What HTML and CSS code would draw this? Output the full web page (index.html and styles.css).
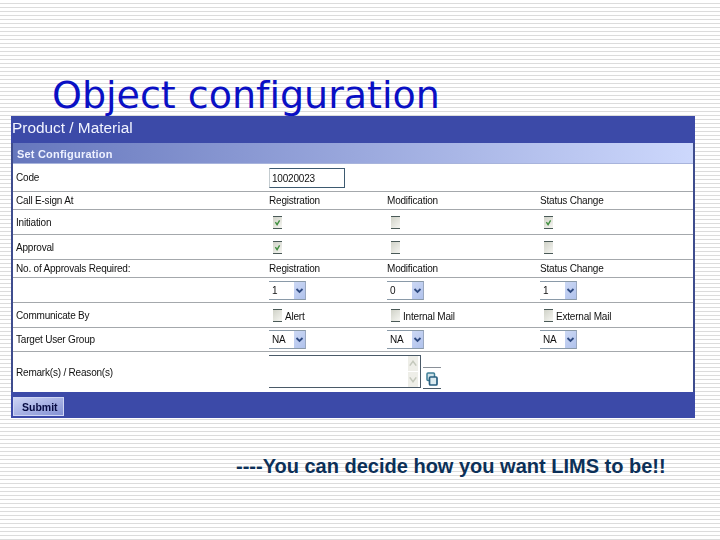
FILE: index.html
```html
<!DOCTYPE html>
<html lang="en">
<head>
<meta charset="utf-8">
<title>Object configuration</title>
<link rel="stylesheet" href="styles.css">
</head>
<body>
<svg class="defs" width="0" height="0" aria-hidden="true">
  <symbol id="tick" viewBox="0 0 9 13"><path d="M2 6l2 3 3-5" fill="none" stroke="#3f8f3f" stroke-width="1.6"/></symbol>
  <symbol id="chev" viewBox="0 0 11 17"><path d="M2.5 7l3 3 3-3" fill="none" stroke="#2f4a80" stroke-width="1.8"/></symbol>
</svg>
<h1 class="title">Object configuration</h1>
<main class="panel">
  <div class="panel-head">Product / Material</div>
  <div class="section-head">Set Configuration</div>
  <div class="row h28">
    <div class="cell">Code</div>
    <div class="cell wide"><span class="input">10020023</span></div>
  </div>
  <div class="row h18">
    <div class="cell">Call E-sign At</div>
    <div class="cell">Registration</div>
    <div class="cell">Modification</div>
    <div class="cell">Status Change</div>
  </div>
  <div class="row h25">
    <div class="cell">Initiation</div>
    <div class="cell"><span class="check"><svg class="tick"><use href="#tick"/></svg></span></div>
    <div class="cell"><span class="check"></span></div>
    <div class="cell"><span class="check"><svg class="tick"><use href="#tick"/></svg></span></div>
  </div>
  <div class="row h25">
    <div class="cell">Approval</div>
    <div class="cell"><span class="check"><svg class="tick"><use href="#tick"/></svg></span></div>
    <div class="cell"><span class="check"></span></div>
    <div class="cell"><span class="check"></span></div>
  </div>
  <div class="row h18">
    <div class="cell">No. of Approvals Required:</div>
    <div class="cell">Registration</div>
    <div class="cell">Modification</div>
    <div class="cell">Status Change</div>
  </div>
  <div class="row h25">
    <div class="cell"></div>
    <div class="cell"><span class="select"><span class="value">1</span><span class="arrow"><svg class="chev"><use href="#chev"/></svg></span></span></div>
    <div class="cell"><span class="select"><span class="value">0</span><span class="arrow"><svg class="chev"><use href="#chev"/></svg></span></span></div>
    <div class="cell"><span class="select"><span class="value">1</span><span class="arrow"><svg class="chev"><use href="#chev"/></svg></span></span></div>
  </div>
  <div class="row h25">
    <div class="cell">Communicate By</div>
    <div class="cell"><span class="check"></span><span class="opt">Alert</span></div>
    <div class="cell"><span class="check"></span><span class="opt">Internal Mail</span></div>
    <div class="cell"><span class="check"></span><span class="opt">External Mail</span></div>
  </div>
  <div class="row h24">
    <div class="cell">Target User Group</div>
    <div class="cell"><span class="select"><span class="value">NA</span><span class="arrow"><svg class="chev"><use href="#chev"/></svg></span></span></div>
    <div class="cell"><span class="select"><span class="value">NA</span><span class="arrow"><svg class="chev"><use href="#chev"/></svg></span></span></div>
    <div class="cell"><span class="select"><span class="value">NA</span><span class="arrow"><svg class="chev"><use href="#chev"/></svg></span></span></div>
  </div>
  <div class="row h41">
    <div class="cell">Remark(s) / Reason(s)</div>
    <div class="cell wide remarks">
      <span class="textarea">
        <span class="scroll">
          <span class="sbtn"><svg class="sgl" viewBox="0 0 9 14"><path d="M1.5 9l3-4 3 4" fill="none" stroke="#c4c8bc" stroke-width="1.4"/></svg></span>
          <span class="sbtn"><svg class="sgl" viewBox="0 0 9 14"><path d="M1.5 5l3 4 3-4" fill="none" stroke="#c4c8bc" stroke-width="1.4"/></svg></span>
        </span>
      </span>
      <span class="picker">
        <svg class="copy" viewBox="0 0 12 15">
          <rect x="1" y="1" width="7.5" height="7.5" rx="1" fill="#cfe3ea" stroke="#3f7f96" stroke-width="1.5"/>
          <rect x="3.5" y="5" width="7.5" height="8" rx="1" fill="#dcebf0" stroke="#2a6080" stroke-width="1.7"/>
        </svg>
      </span>
    </div>
  </div>
  <div class="panel-foot"><span class="submit">Submit</span></div>
</main>
<p class="caption">----You can decide how you want LIMS to be!!</p>
</body>
</html>
```

FILE: styles.css
```css
* { box-sizing: border-box; }
html, body { margin: 0; padding: 0; }
body {
  width: 720px;
  height: 540px;
  overflow: hidden;
  background-color: #fff;
  background-image: repeating-linear-gradient(to bottom, #fff 0, #fff 3px, #dcdcdc 3px, #dcdcdc 4px);
  font-family: "Liberation Sans", Arial, sans-serif;
}
.defs { position: absolute; }
.title {
  margin: 0;
  height: 116px;
  padding: 72px 0 0 52px;
  font-family: "DejaVu Sans", Verdana, sans-serif;
  font-variant-ligatures: none;
  font-weight: 400;
  font-size: 38px;
  line-height: 46px;
  color: #0a10c4;
  overflow: hidden;
  white-space: nowrap;
}
.panel {
  width: 684px;
  height: 302px;
  margin-left: 11px;
  background: #fff;
  border-left: 2px solid #3f4d8e;
  border-right: 2px solid #3f4d8e;
  color: #111;
  font-size: 10px;
  letter-spacing: -0.2px;
  filter: blur(0.25px);
}
.panel-head {
  height: 27px;
  margin: 0 -2px;
  padding-left: 1px;
  background: #3c4aa8;
  color: #f2f4ff;
  font-size: 15.4px;
  letter-spacing: 0;
  line-height: 24px;
  white-space: nowrap;
}
.section-head {
  height: 21px;
  padding-left: 4px;
  background: linear-gradient(to right, #6677bd, #cdd8fc);
  color: #eef1ff;
  font-size: 11px;
  font-weight: 700;
  letter-spacing: 0.2px;
  line-height: 22px;
  border-bottom: 1px solid #a8b4dc;
}
.row {
  display: grid;
  grid-template-columns: 256px 118px 153px 1fr;
  border-bottom: 1px solid #a4a8ac;
}
.h18 { height: 18px; }
.h24 { height: 24px; }
.h25 { height: 25px; }
.h28 { height: 28px; }
.h41 { height: 41px; }
.cell {
  display: flex;
  align-items: center;
  min-width: 0;
  padding-left: 3px;
  white-space: nowrap;
}
.cell + .cell { padding-left: 0; }
.wide { grid-column: 2 / 5; }
.input {
  width: 76px;
  height: 20px;
  padding-left: 2px;
  border: 1px solid #3d5a70;
  border-left-color: #c4ccd0;
  background: #fff;
  line-height: 19px;
}
.check {
  flex: none;
  width: 9px;
  height: 13px;
  margin-left: 4px;
  border-top: 1px solid #4a5a58;
  border-bottom: 1px solid #4a5a58;
  background: linear-gradient(135deg, #d0d2c8, #f6f6f2);
}
.tick { display: block; width: 9px; height: 11px; }
.opt { margin-left: 3px; position: relative; top: 1px; }
.select {
  display: flex;
  justify-content: space-between;
  width: 37px;
  height: 19px;
  border-top: 1px solid #8a9aa8;
  border-bottom: 1px solid #8a9aa8;
  border-right: 1px solid #9aa8c0;
  line-height: 17px;
}
.value { padding-left: 3px; }
.arrow {
  width: 11px;
  background: linear-gradient(135deg, #ccd8f4, #b0c2ec);
}
.chev { display: block; width: 11px; height: 17px; }
.remarks { align-items: flex-start; padding-top: 3px; }
.textarea {
  display: flex;
  justify-content: flex-end;
  flex: none;
  width: 152px;
  height: 33px;
  padding-right: 2px;
  border-top: 1px solid #4a5a68;
  border-bottom: 1px solid #4a5a68;
  border-right: 1px solid #4a5a68;
}
.scroll { display: flex; flex-direction: column; gap: 1px; width: 10px; }
.sbtn { flex: 1; background: #eeeee8; }
.sgl { display: block; width: 10px; height: 15px; }
.picker {
  display: flex;
  justify-content: center;
  flex: none;
  width: 18px;
  height: 22px;
  margin: 12px 0 0 2px;
  padding-top: 4px;
  border-top: 1px solid #8a9098;
  border-bottom: 1px solid #4a5a68;
}
.copy { width: 12px; height: 15px; }
.panel-foot {
  height: 26px;
  margin: -1px -2px 0;
  padding: 5px 0 0 2px;
  background: #3c4aa8;
}
.submit {
  display: block;
  width: 51px;
  height: 19px;
  padding-left: 8px;
  border: 1px solid #d0d6f4;
  background: linear-gradient(160deg, #ccd3f4, #8492d4);
  color: #060a40;
  font-size: 10.5px;
  font-weight: 700;
  letter-spacing: 0;
  line-height: 18px;
}
.caption {
  margin: 38px 0 0;
  padding-left: 236px;
  color: #0c3058;
  font-size: 20px;
  font-weight: 700;
  line-height: 21px;
  white-space: nowrap;
}
```
